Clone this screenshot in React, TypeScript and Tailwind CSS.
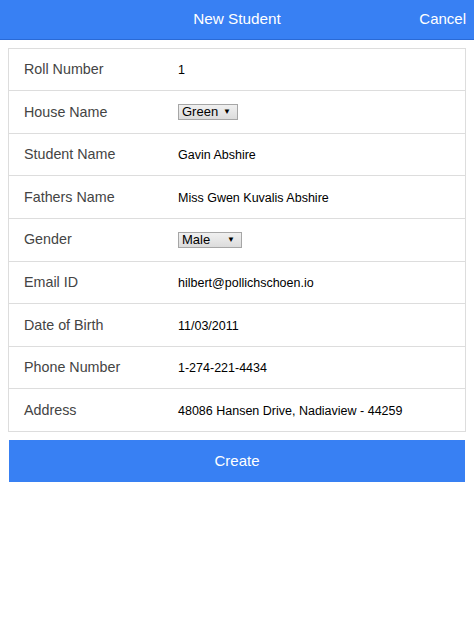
import React from 'react';

interface FieldRow {
  label: string;
  value: string;
  select?: boolean;
  selectWidth?: string;
}

const rows: FieldRow[] = [
  { label: 'Roll Number', value: '1' },
  { label: 'House Name', value: 'Green', select: true, selectWidth: 'w-[60px]' },
  { label: 'Student Name', value: 'Gavin Abshire' },
  { label: 'Fathers Name', value: 'Miss Gwen Kuvalis Abshire' },
  { label: 'Gender', value: 'Male', select: true, selectWidth: 'w-[64px]' },
  { label: 'Email ID', value: 'hilbert@pollichschoen.io' },
  { label: 'Date of Birth', value: '11/03/2011' },
  { label: 'Phone Number', value: '1-274-221-4434' },
  { label: 'Address', value: '48086 Hansen Drive, Nadiaview - 44259' },
];

const FakeSelect: React.FC<{ value: string; width: string }> = ({ value, width }) => (
  <div
    className={`${width} h-[16px] flex items-center justify-between pl-[3px] pr-[6px] border border-[#a6a6a6] bg-gradient-to-b from-[#f0f0f0] to-[#dcdcdc] text-[13px] leading-none text-black`}
  >
    <span>{value}</span>
    <span className="text-[8px] leading-none">▼</span>
  </div>
);

const App: React.FC = () => {
  return (
    <div className="w-[474px] h-[618px] bg-white font-['Liberation_Sans',Arial,sans-serif]">
      <header className="h-[40px] bg-[#3880f3] border-b border-[#2a6ad6] flex items-center justify-center relative">
        <span className="text-white text-[15.3px]">New Student</span>
        <span className="absolute right-[8px] text-white text-[15px]">Cancel</span>
      </header>

      <div className="px-[8px] pt-[8px]">
        <div className="border border-[#dddddd]">
          {rows.map((row, i) => (
            <div
              key={row.label}
              className={`flex items-center ${i > 0 ? 'h-[42.625px] border-t border-[#dddddd]' : 'h-[41px]'}`}
            >
              <div className="w-[169px] pl-[15px] pt-[1px] text-[14.3px] text-[#444444]">{row.label}</div>
              {row.select ? (
                <FakeSelect value={row.value} width={row.selectWidth || 'w-[60px]'} />
              ) : (
                <div className="pt-[2px] text-[12.5px] text-black">{row.value}</div>
              )}
            </div>
          ))}
        </div>

        <button className="mt-[8px] ml-[1px] w-[456px] h-[42px] bg-[#3880f3] text-white text-[15px] flex items-center justify-center">
          Create
        </button>
      </div>
    </div>
  );
};

export default App;
